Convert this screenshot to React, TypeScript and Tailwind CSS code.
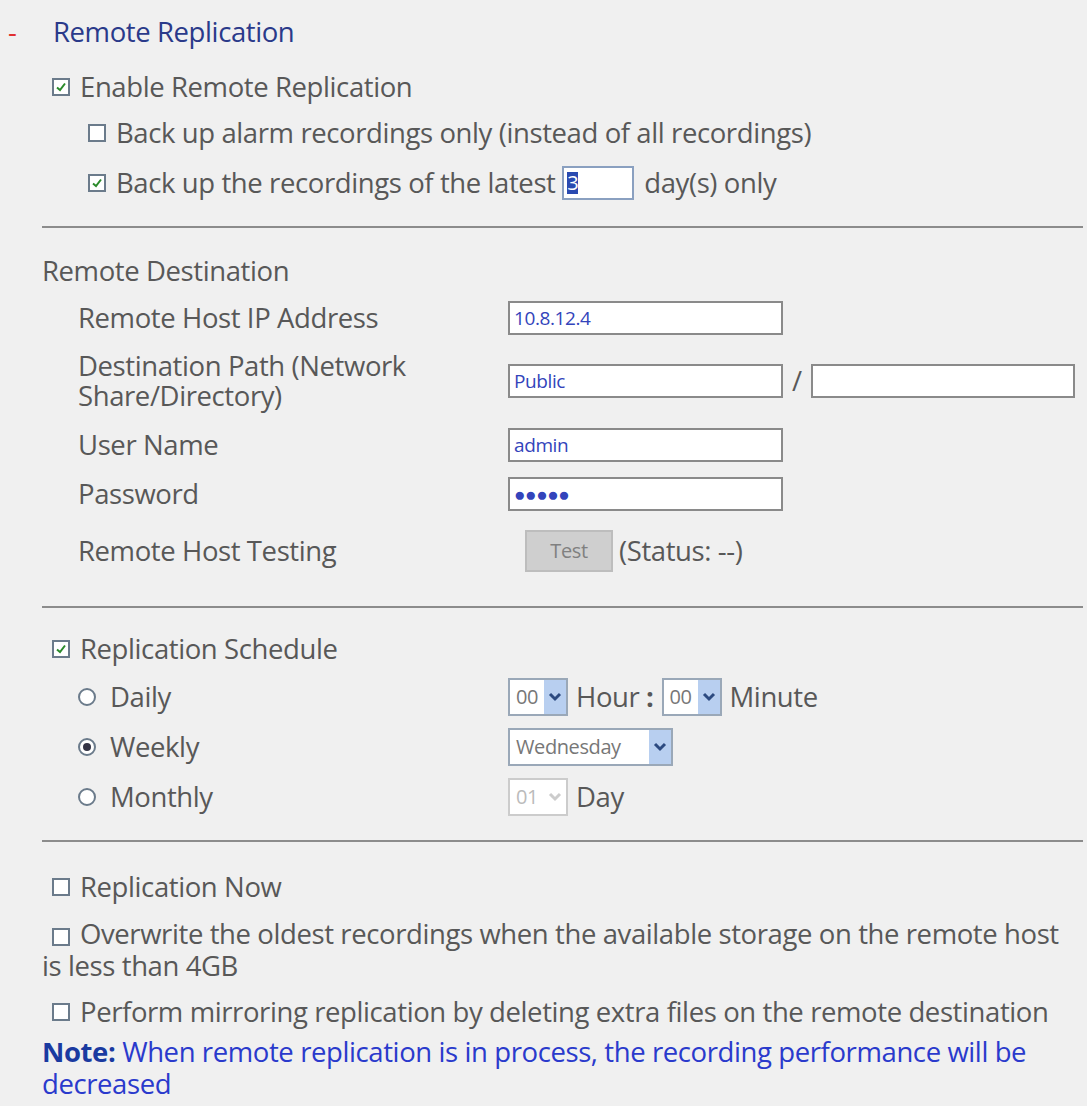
import React from "react";

const Cb = ({ on }: { on?: boolean }) => (
  <span className="inline-flex w-[18px] h-[18px] border-2 border-[#6b7b8b] bg-white items-center justify-center mr-[10px] shrink-0">
    {on && (
      <svg width="12" height="12" viewBox="0 0 12 12"><path d="M2 6.5 L5 9 L10 2.5" stroke="#2a8a2a" strokeWidth="2" fill="none" /></svg>
    )}
  </span>
);
const Radio = ({ on }: { on?: boolean }) => (
  <span className="inline-flex w-[18px] h-[18px] rounded-full border-2 border-[#6b7b8b] bg-white items-center justify-center mr-[14px] shrink-0">
    {on && <span className="w-[8px] h-[8px] rounded-full bg-[#334]" />}
  </span>
);
const Sel = ({ v, w, dis }: { v: string; w: string; dis?: boolean }) => (
  <span className={`inline-flex items-center h-[38px] border-2 ${dis ? "border-[#ccc] text-[#bbb]" : "border-[#9aa8b8] text-[#777]"} bg-white pl-[6px] text-[20px] ${w}`}>
    <span className="flex-1">{v}</span>
    <span className={`w-[22px] h-full flex items-center justify-center ${dis ? "bg-white" : "bg-[#b8cff0]"}`}>
      <svg width="14" height="10" viewBox="0 0 14 10"><path d="M2 2 L7 7 L12 2" stroke={dis ? "#ccc" : "#2c4a80"} strokeWidth="3" fill="none" /></svg>
    </span>
  </span>
);
const Inp = ({ v, w = "w-[275px]" }: { v?: string; w?: string }) => (
  <span className={`inline-flex items-center h-[34px] border-2 border-[#8a8a8a] bg-white px-[4px] text-[19px] text-[#3344bb] ${w}`}>{v}</span>
);
const Hr = () => <div className="ml-[42px] mr-[4px] h-[2px] bg-[#8c8c8c]" />;

export default function App() {
  return (
    <div className="w-[1087px] h-[1106px] bg-[#f0f0f0] text-[#585858] text-[27.5px] overflow-hidden" style={{ fontFamily: "'Open Sans', 'Noto Sans', sans-serif", letterSpacing: "-0.4px" }}>
      <div className="h-[64px] flex items-center pl-[8px]">
        <span className="text-[#e03030] w-[45px]">-</span>
        <span className="text-[#2a3a8a]">Remote Replication</span>
      </div>
      <div className="h-[46px] flex items-center pl-[52px]"><Cb on />Enable Remote Replication</div>
      <div className="h-[46px] flex items-center pl-[88px]"><Cb />Back up alarm recordings only (instead of all recordings)</div>
      <div className="h-[54px] flex items-center pl-[88px]"><Cb on />Back up the recordings of the latest&nbsp;
        <span className="inline-flex items-center h-[34px] w-[72px] border-2 border-[#8aa0c0] bg-white px-[3px] text-[20px]"><span className="bg-[#2a4ab0] text-white leading-[22px]">3</span></span>
        <span className="ml-[10px]">day(s) only</span>
      </div>
      <div className="h-[16px]" />
      <Hr />
      <div className="h-[46px] mt-[20px] flex items-center pl-[42px]">Remote Destination</div>
      <div className="h-[48px] flex items-center pl-[78px]"><span className="w-[430px]">Remote Host IP Address</span><Inp v="10.8.12.4" /></div>
      <div className="h-[78px] flex items-center pl-[78px]"><span className="w-[430px] leading-[30px]">Destination Path (Network<br />Share/Directory)</span><Inp v="Public" /><span className="mx-[9px]">/</span><Inp w="w-[264px]" /></div>
      <div className="h-[50px] flex items-center pl-[78px]"><span className="w-[430px]">User Name</span><Inp v="admin" /></div>
      <div className="h-[48px] flex items-center pl-[78px]"><span className="w-[430px]">Password</span><Inp v="●●●●●" /></div>
      <div className="h-[66px] flex items-center pl-[78px]"><span className="w-[447px]">Remote Host Testing</span>
        <span className="inline-flex items-center justify-center w-[88px] h-[42px] bg-[#cfcfcf] border-2 border-[#bdbdbd] text-[#808080] text-[20px]">Test</span>
        <span className="ml-[6px]">(Status: --)</span>
      </div>
      <div className="h-[22px]" />
      <Hr />
      <div className="h-[46px] mt-[18px] flex items-center pl-[52px]"><Cb on />Replication Schedule</div>
      <div className="h-[50px] flex items-center pl-[78px]"><span className="w-[430px] flex items-center"><Radio />Daily</span><Sel v="00" w="w-[60px]" /><span className="mx-[8px]">Hour <b>:</b></span><Sel v="00" w="w-[60px]" /><span className="ml-[8px]">Minute</span></div>
      <div className="h-[50px] flex items-center pl-[78px]"><span className="w-[430px] flex items-center"><Radio on />Weekly</span><Sel v="Wednesday" w="w-[165px]" /></div>
      <div className="h-[50px] flex items-center pl-[78px]"><span className="w-[430px] flex items-center"><Radio />Monthly</span><Sel v="01" w="w-[60px]" dis /><span className="ml-[8px]">Day</span></div>
      <div className="h-[18px]" />
      <Hr />
      <div className="h-[46px] mt-[22px] flex items-center pl-[52px]"><Cb />Replication Now</div>
      <div className="pl-[42px] pr-[4px] mt-[8px] leading-[32px]"><span className="inline-flex ml-[10px] align-[-2px]"><Cb /></span>Overwrite the oldest recordings when the available storage on the remote host is less than 4GB</div>
      <div className="h-[48px] mt-[6px] flex items-center pl-[52px]"><Cb />Perform mirroring replication by deleting extra files on the remote destination</div>
      <div className="pl-[42px] pr-[20px] text-[#2a3acc] leading-[32px]"><b className="text-[#1a3aa0]">Note:</b> When remote replication is in process, the recording performance will be decreased</div>
    </div>
  );
}
